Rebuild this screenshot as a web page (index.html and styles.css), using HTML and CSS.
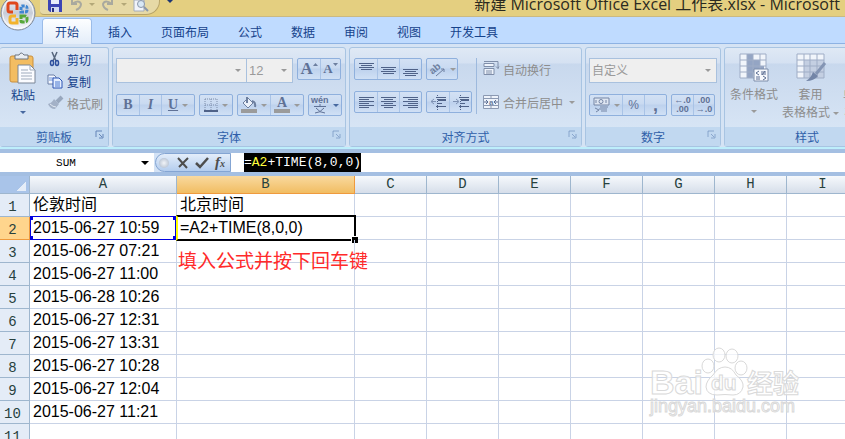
FILE: index.html
```html
<!DOCTYPE html>
<html lang="zh-CN">
<head>
  <meta charset="UTF-8">
  <meta name="viewport" content="width=device-width, initial-scale=1.0">
  <title>新建 Microsoft Office Excel 工作表.xlsx</title>
  <link rel="stylesheet" href="styles.css">
</head>
<body>
  <header class="titlebar">
    <button class="office" aria-label="Office">
      <svg width="36" height="36" viewBox="0 0 36 36">
        <defs>
          <linearGradient id="orb" x1="0" y1="0" x2="0" y2="1">
            <stop offset="0" stop-color="#f4f6fa"/>
            <stop offset=".5" stop-color="#c6ccd8"/>
            <stop offset="1" stop-color="#fbfcff"/>
          </linearGradient>
        </defs>
        <circle cx="18" cy="18" r="17" fill="url(#orb)" stroke="#7d8797"/>
        <circle cx="18" cy="18" r="15.500" fill="none" stroke="#fff" opacity=".8"/>
        <g fill="none" stroke-width="3">
          <path d="M13 17H10q-2 0-2-2V10q0-2 2-2h5q2 0 2 2v5" stroke="#e0471c"/>
          <path d="M21 17h4q2 0 2-2v-2q0-2-2-2h-3q-1 0-1 1z" stroke="#3f86d2" stroke-dasharray="3 1"/>
          <path d="M16 21h-4q-2 0-2 2v3q0 2 2 2h5v-5" stroke="#f3b32c"/>
          <path d="M21 21h4q2 0 2 2v2q0 2-2 2h-3q-1 0-1-1z" stroke="#57a83a" stroke-dasharray="5 1"/>
        </g>
      </svg>
    </button>
    <div class="quick">
      <svg width="16" height="14" viewBox="0 0 16 14"><path d="M1 0h14v12H3l-2-2z" fill="#3d45b5"/><path d="M4 0h8v4H4z" fill="#e9edfb"/><path d="M4 7h8v5H4z" fill="#d3daf2"/><path d="M5 8h2v4H5z" fill="#283080"/></svg>
      <svg width="14" height="12" viewBox="0 0 14 12"><path d="M3 0v4h5M3 4q7-5 9 0 0 4-5 6" fill="none" stroke="#a9a99e" stroke-width="2"/></svg>
      <i class="arrow light"></i>
      <svg width="14" height="12" viewBox="0 0 14 12"><path d="M11 0v4H6M11 4Q4-1 2 4q0 4 5 6" fill="none" stroke="#a9a99e" stroke-width="2"/></svg>
      <i class="arrow light"></i>
      <svg width="16" height="14" viewBox="0 0 16 14"><path d="M1 0h10v11H1z" fill="#f1f4fa" stroke="#a3acba"/><circle cx="8" cy="4" r="3.500" fill="#d8e8f6" stroke="#8a97aa"/><path d="M11 7l4 4" stroke="#8a97aa" stroke-width="2"/></svg>
    </div>
    <button class="customize" aria-label="自定义快速访问工具栏"><i class="arrow navy"></i></button>
    <div class="title">新建 Microsoft Office Excel 工作表.xlsx - Microsoft</div>
  </header>

  <nav class="tabs">
    <button class="tab active">开始</button>
    <button class="tab">插入</button>
    <button class="tab">页面布局</button>
    <button class="tab">公式</button>
    <button class="tab">数据</button>
    <button class="tab">审阅</button>
    <button class="tab">视图</button>
    <button class="tab">开发工具</button>
  </nav>

  <section class="ribbon">
    <div class="group">
      <div class="group-body clipboard">
        <button class="big paste">
          <svg width="28" height="32" viewBox="0 0 28 32"><rect x="1" y="4" width="23" height="26" rx="2" fill="#f3bd62" stroke="#c98f3c"/><path d="M6 3h4q2-4 5 0h4v4H6z" fill="#e9edf2" stroke="#6c7480"/><path d="M9 13h12l5 5v13H9z" fill="#fbfcff" stroke="#7b8697"/><path d="M21 13v5h5M12 18h7M12 21h11M12 24h11M12 27h11" fill="none" stroke="#9fabbc"/></svg>
          <span>粘贴</span>
          <i class="arrow blue"></i>
        </button>
        <div class="stack">
          <button class="small"><svg width="16" height="16" viewBox="0 0 16 16"><path d="M5 1l4 9M10 1L6 10" stroke="#56657c" stroke-width="1.500"/><ellipse cx="5" cy="12" rx="1.500" ry="2.500" fill="none" stroke="#2c4f9e" stroke-width="1.500"/><ellipse cx="10" cy="12" rx="1.500" ry="2.500" fill="none" stroke="#2c4f9e" stroke-width="1.500"/></svg>剪切</button>
          <button class="small"><svg width="16" height="16" viewBox="0 0 16 16"><path d="M1 2h6l2 2v7H1z" fill="#f4f8ff" stroke="#6a7fa6"/><path d="M2 5h5M2 7h5" stroke="#6f93d8"/><path d="M6 5h6l3 3v7H6z" fill="#e4eeff" stroke="#2c55b4"/><path d="M8 9h5M8 11h5M8 13h5" stroke="#4b78d0"/></svg>复制</button>
          <button class="small off"><svg width="16" height="16" viewBox="0 0 16 16"><path d="M15 2l-5 5" stroke="#98a7bd" stroke-width="4"/><path d="M7 4l5 5-4 5q-5 0-7-5 4-1 6-5z" fill="#a3b1c7"/><path d="M3 9q3 3 6 3" fill="none" stroke="#e2e9f3"/></svg>格式刷</button>
        </div>
      </div>
      <div class="group-label">剪贴板<svg class="launch" width="9" height="9" viewBox="0 0 9 9"><path d="M1 7V1h6M4 4l3 3M8 4v4H4" fill="none" stroke="#6485b8"/></svg></div>
    </div>

    <div class="group">
      <div class="group-body rows">
        <div class="row">
          <div class="fields">
            <label class="combo font-name"><select aria-label="字体"><option></option></select><i class="arrow"></i></label>
            <label class="combo font-size"><select aria-label="字号"><option>12</option></select><i class="arrow"></i></label>
          </div>
          <div class="btns">
            <button class="serif big-a" aria-label="增大字号">A<svg width="5" height="12" viewBox="0 0 5 12"><path d="M0 3l2.500-3L5 3z" fill="#6d7f9f"/></svg></button>
            <button class="serif small-a" aria-label="减小字号">A<svg width="5" height="12" viewBox="0 0 5 12"><path d="M0 0h5L2.500 3z" fill="#6d7f9f"/></svg></button>
          </div>
        </div>
        <div class="row">
          <div class="btns">
            <button class="serif">B</button>
            <button class="serif italic">I</button>
            <button class="serif wide"><u>U</u><i class="arrow"></i></button>
          </div>
          <div class="btns">
            <button class="pick" aria-label="边框"><svg width="14" height="14" viewBox="0 0 14 14"><path d="M1 1h12M1 7h12M1 1v11M7 1v11M13 1v11" stroke="#7d8daa" stroke-dasharray="1 1" fill="none"/><path d="M0 13h14" stroke="#4f6288" stroke-width="2"/></svg><i class="arrow"></i></button>
          </div>
          <div class="btns">
            <button class="pick" aria-label="填充颜色"><svg width="16" height="16" viewBox="0 0 16 16"><path d="M7 1l5 5-5 5-5-5z" fill="#eaf0f9" stroke="#6d7f9f"/><path d="M6 0v6M11 4q4 1 3 6" stroke="#6d7f9f" stroke-width="2" fill="none"/><path d="M0 12h16v4H0z" fill="#9b9b9b"/></svg><i class="arrow"></i></button>
            <button class="pick" aria-label="字体颜色"><span class="font-color">A</span><i class="arrow"></i></button>
          </div>
          <div class="btns">
            <button class="pick" aria-label="拼音"><svg width="18" height="18" viewBox="0 0 18 18"><text x="0" y="7" class="pinyin">wén</text><path d="M3 10.500h12M9 8v2M5 12q4 5 9 5M13 12q-4 5-9 5" fill="none" stroke="#5f7196"/></svg><i class="arrow blue"></i></button>
          </div>
        </div>
      </div>
      <div class="group-label">字体<svg class="launch dim" width="9" height="9" viewBox="0 0 9 9"><path d="M1 7V1h6M4 4l3 3M8 4v4H4" fill="none" stroke="#6485b8"/></svg></div>
    </div>

    <div class="group">
      <div class="group-body align">
        <div class="rows">
          <div class="row">
            <div class="btns lines">
              <button aria-label="顶端对齐"><svg width="15" height="15" viewBox="0 0 15 15"><path d="M0 1.500h15M2 3.500h11M0 5.500h15M2 7.500h11" stroke="#4f6288"/></svg></button>
              <button aria-label="垂直居中"><svg width="15" height="15" viewBox="0 0 15 15"><path d="M0 5.500h15M2 7.500h11M0 9.500h15M2 11.500h11" stroke="#4f6288"/></svg></button>
              <button aria-label="底端对齐"><svg width="15" height="15" viewBox="0 0 15 15"><path d="M0 7.500h15M2 9.500h11M0 11.500h15M2 13.500h11" stroke="#4f6288"/></svg></button>
            </div>
            <div class="btns">
              <button class="orient" aria-label="方向"><svg width="17" height="16" viewBox="0 0 17 16"><text x="1" y="11" transform="rotate(-40 6 9)" class="ab">ab</text><path d="M7 15l8-7M12 8h3v3" fill="none" stroke="#6d7f9f"/></svg><i class="arrow"></i></button>
            </div>
          </div>
          <div class="row">
            <div class="btns lines">
              <button aria-label="左对齐"><svg width="15" height="13" viewBox="0 0 15 13"><path d="M0 1.500h15M0 3.500h10M0 5.500h15M0 7.500h10M0 9.500h15M0 11.500h10" stroke="#4f6288"/></svg></button>
              <button aria-label="居中"><svg width="15" height="13" viewBox="0 0 15 13"><path d="M0 1.500h15M3 3.500h9M0 5.500h15M3 7.500h9M0 9.500h15M3 11.500h9" stroke="#4f6288"/></svg></button>
              <button aria-label="右对齐"><svg width="15" height="13" viewBox="0 0 15 13"><path d="M0 1.500h15M5 3.500h10M0 5.500h15M5 7.500h10M0 9.500h15M5 11.500h10" stroke="#4f6288"/></svg></button>
            </div>
            <div class="btns lines">
              <button aria-label="减少缩进"><svg width="16" height="15" viewBox="0 0 16 15"><path d="M6 2.500h10M8 4.500h8M8 5.500h8M8 8.500h4M6 11.500h10" stroke="#4f6288"/><path d="M7.500 0v15" stroke="#4f6288" stroke-dasharray="1 1"/><path d="M6 6.500H1M4 4L1 6.500 4 9" fill="none" stroke="#7f92b4"/></svg></button>
              <button aria-label="增加缩进"><svg width="16" height="15" viewBox="0 0 16 15"><path d="M6 2.500h10M8 4.500h8M8 5.500h8M8 8.500h4M6 11.500h10" stroke="#4f6288"/><path d="M7.500 0v15" stroke="#4f6288" stroke-dasharray="1 1"/><path d="M0 6.500h5M3 4l3 2.500L3 9" fill="none" stroke="#7f92b4"/></svg></button>
            </div>
          </div>
        </div>
        <div class="wrap">
          <button class="small off"><svg width="16" height="16" viewBox="0 0 16 16"><path d="M1 2.500h10v3H1zM1 7.500h10v6H1z" fill="#eef3fb" stroke="#7f8ea9"/><path d="M3 10h6M3 12h6M1 .500h14v7l-2-2M15 7.500l1-2" fill="none" stroke="#7f8ea9"/></svg>自动换行</button>
          <button class="small off"><svg width="16" height="16" viewBox="0 0 16 16"><path d="M.500 1.500h15v13H.500zM.500 4.500h15M.500 11.500h15M8 1.500v3M8 11.500v3" fill="#eef3fb" stroke="#8b99b2"/><path d="M1 8h4M11 8h4M3 6l2 2-2 2M13 6l-2 2 2 2" fill="none" stroke="#5a6d92"/><text x="6" y="11" class="merge-a">a</text></svg>合并后居中<i class="arrow"></i></button>
        </div>
      </div>
      <div class="group-label">对齐方式<svg class="launch dim" width="9" height="9" viewBox="0 0 9 9"><path d="M1 7V1h6M4 4l3 3M8 4v4H4" fill="none" stroke="#6485b8"/></svg></div>
    </div>

    <div class="group">
      <div class="group-body rows">
        <div class="row">
          <label class="combo number-format"><select aria-label="数字格式"><option>自定义</option></select><i class="arrow"></i></label>
        </div>
        <div class="row">
          <div class="btns">
            <button class="pick" aria-label="会计数字格式"><svg width="17" height="16" viewBox="0 0 17 16"><path d="M1 1h15v7H1z" fill="#dfe6f2" stroke="#7485a5"/><circle cx="8" cy="4.500" r="2" fill="none" stroke="#7485a5"/><path d="M3 3v3M13 3v3M7 10h8M6 12h8M8 14h6M2 11l4 2-3 2" fill="none" stroke="#7485a5"/></svg><i class="arrow"></i></button>
            <button>%</button>
            <button class="comma">,</button>
          </div>
          <div class="btns digits">
            <button aria-label="增加小数位数"><span>←.0</span><span>.00</span></button>
            <button aria-label="减少小数位数"><span>.00</span><span>→.0</span></button>
          </div>
        </div>
      </div>
      <div class="group-label">数字<svg class="launch dim" width="9" height="9" viewBox="0 0 9 9"><path d="M1 7V1h6M4 4l3 3M8 4v4H4" fill="none" stroke="#6485b8"/></svg></div>
    </div>

    <div class="group">
      <div class="group-body styles">
        <button class="big off">
          <svg width="30" height="30" viewBox="0 0 30 30"><path d="M1 2h26v24H1z" fill="#f1f5fb"/><path d="M8 2h6v24H8zM14 8h7v6h-7zM14 14h11v6H14z" fill="#94a5c4"/><path d="M1 2h26M1 8h26M1 14h26M1 20h26M1 26h26M1 2v24M8 2v24M14 2v24M21 2v24M27 2v24" stroke="#9fadc6" fill="none"/><path d="M15 17h14v12H15z" fill="#f7f9fd" stroke="#7d8daa"/><path d="M20 19l-3 2 3 2M22 20h5M22 22h5M26 19l-3 4M17 25h4M17 27h4M24 24l3 2-3 2" fill="none" stroke="#5a6d92"/></svg>
          <span>条件格式</span>
          <i class="arrow"></i>
        </button>
        <button class="big off">
          <svg width="30" height="30" viewBox="0 0 30 30"><path d="M1 2h27v24H1z" fill="#f1f5fb"/><path d="M8 8h20v18H8z" fill="#c4cfe2"/><path d="M1 2h27M1 8h27M1 14h27M1 20h27M1 26h27M1 2v24M8 2v24M14 2v24M21 2v24M28 2v24" stroke="#9fadc6" fill="none"/><path d="M29 11l-9 11" stroke="#8495b4" stroke-width="3"/><path d="M17 20l5 4q-4 5-12 5 5-3 7-9z" fill="#7385a7"/></svg>
          <span>套用</span>
          <span>表格格式<i class="arrow"></i></span>
        </button>
        <button class="big off">
          <svg width="30" height="30" viewBox="0 0 30 30"><path d="M1 2h26v24H1z" fill="#f1f5fb" stroke="#9fadc6"/></svg>
          <span>单元格</span>
          <span>样式<i class="arrow"></i></span>
        </button>
      </div>
      <div class="group-label">样式</div>
    </div>
  </section>

  <section class="formula-bar">
    <div class="name-box">
      <input type="text" value="SUM" aria-label="名称框">
      <button aria-label="名称列表"><i class="arrow black"></i></button>
    </div>
    <div class="fx">
      <i class="knob"></i>
      <button aria-label="取消"><svg width="12" height="12" viewBox="0 0 12 12"><path d="M1 1l9 10M11 1L2 10" stroke="#4d4d4d" stroke-width="2"/></svg></button>
      <button aria-label="输入"><svg width="14" height="12" viewBox="0 0 14 12"><path d="M1 6l4 4 8-9" fill="none" stroke="#4d4d4d" stroke-width="2.500"/></svg></button>
      <button class="fn" aria-label="插入函数">f<small>x</small></button>
    </div>
    <div class="formula" role="textbox" contenteditable="true" spellcheck="false" aria-label="编辑栏"><span class="picked">=<span class="ref">A2</span>+TIME(8,0,0)</span></div>
  </section>

  <main class="sheet">
    <table>
      <colgroup>
        <col class="c-num"><col class="c-a"><col class="c-b"><col span="7">
      </colgroup>
      <thead>
        <tr><th class="corner"></th><th>A</th><th class="current">B</th><th>C</th><th>D</th><th>E</th><th>F</th><th>G</th><th>H</th><th>I</th></tr>
      </thead>
      <tbody>
        <tr><th>1</th><td>伦敦时间</td><td>北京时间</td><td></td><td></td><td></td><td></td><td></td><td></td><td></td></tr>
        <tr><th class="current">2</th><td class="referenced">2015-06-27 10:59<i class="range"></i></td><td class="editing">=A2+TIME(8,0,0)<i class="cursor"></i></td><td></td><td></td><td></td><td></td><td></td><td></td><td></td></tr>
        <tr><th>3</th><td>2015-06-27 07:21</td><td class="noted"><span class="note">填入公式并按下回车键</span></td><td></td><td></td><td></td><td></td><td></td><td></td><td></td></tr>
        <tr><th>4</th><td>2015-06-27 11:00</td><td></td><td></td><td></td><td></td><td></td><td></td><td></td><td></td></tr>
        <tr><th>5</th><td>2015-06-28 10:26</td><td></td><td></td><td></td><td></td><td></td><td></td><td></td><td></td></tr>
        <tr><th>6</th><td>2015-06-27 12:31</td><td></td><td></td><td></td><td></td><td></td><td></td><td></td><td></td></tr>
        <tr><th>7</th><td>2015-06-27 13:31</td><td></td><td></td><td></td><td></td><td></td><td></td><td></td><td></td></tr>
        <tr><th>8</th><td>2015-06-27 10:28</td><td></td><td></td><td></td><td></td><td></td><td></td><td></td><td></td></tr>
        <tr><th>9</th><td>2015-06-27 12:04</td><td></td><td></td><td></td><td></td><td></td><td></td><td></td><td></td></tr>
        <tr><th>10</th><td>2015-06-27 11:21</td><td></td><td></td><td></td><td></td><td></td><td></td><td></td><td></td></tr>
        <tr><th>11</th><td></td><td></td><td></td><td></td><td></td><td></td><td></td><td></td><td></td></tr>
      </tbody>
    </table>
    <svg class="watermark" width="160" height="76" viewBox="0 0 160 76">
      <text x="3" y="47" class="wm-logo">Bai</text>
      <g class="wm-shape">
        <ellipse cx="61" cy="19" rx="6" ry="7"/>
        <ellipse cx="72" cy="8" rx="6" ry="7"/>
        <ellipse cx="85" cy="9" rx="6" ry="7"/>
        <ellipse cx="94" cy="21" rx="6" ry="7"/>
        <path d="M78 20q7 0 11 8 8 6 7 12-2 8-10 8-8-1-16 0-10 0-11-8 0-6 7-12 5-8 12-8z"/>
      </g>
      <text x="64" y="43" class="wm-du">du</text>
      <text x="100" y="46" class="wm-cn">经验</text>
      <text x="3" y="65" class="wm-url">jingyan.baidu.com</text>
    </svg>
  </main>
</body>
</html>
```
FILE: styles.css
```css
* { box-sizing: border-box; }

body, html { height: 100%; }

body {
  margin: 0;
  display: flex;
  flex-direction: column;
  overflow: hidden;
  background-color: #fff;
  font-family: "Liberation Sans", "Noto Sans CJK SC", sans-serif;
  font-size: 12px;
  color: #15428b;
}

button {
  margin: 0;
  padding: 0;
  border: 0;
  background: none;
  font: inherit;
  color: inherit;
}

svg { display: block; flex: none; overflow: visible; }

.arrow {
  flex: none;
  width: 0;
  height: 0;
  border: 3px solid transparent;
  border-top-color: #9a9a9a;
  border-bottom: 0;
}

.arrow.light { border-top-color: #b3a878; }
.arrow.blue { border-top-color: #47689f; }
.arrow.navy { border-top-color: #1d3573; }
.arrow.black { border-width: 4px 4px 0; border-top-color: #000; }

/* title bar */

.titlebar {
  position: relative;
  flex: none;
  display: flex;
  align-items: flex-start;
  height: 17px;
  padding-left: 40px;
  background-color: #e4cf80;
  border-bottom: 1px solid #cbb982;
}

.office {
  position: absolute;
  left: 0;
  top: -5px;
  z-index: 2;
}

.quick {
  display: flex;
  gap: 6px;
  width: 120px;
  height: 15px;
  padding-left: 7px;
  border: 1px solid #b7a469;
  border-top: 0;
  border-left: 0;
  border-radius: 0 0 14px 4px;
  background-color: #e6d9a6;
}

.quick .arrow { margin-top: 3px; }

.customize { padding: 3px 7px; }

.title {
  flex: 1;
  margin-top: -6px;
  padding-right: 5px;
  text-align: right;
  white-space: nowrap;
  font-family: "Open Sans", "Noto Sans CJK SC", sans-serif;
  font-size: 16px;
  line-height: 21px;
  color: #2b2a20;
}

/* tabs */

.tabs {
  flex: none;
  display: flex;
  gap: 5px;
  height: 27px;
  padding: 2px 0 0 43px;
  background-color: #bfdbff;
  border-bottom: 1px solid #8db2e3;
}

.tab {
  height: 25px;
  padding: 0 12px;
  border-radius: 3px 3px 0 0;
  white-space: nowrap;
}

.tab.active {
  background: linear-gradient(#fdfeff, #e3edf9);
  box-shadow: 0 0 0 1px #9bbce8;
  clip-path: inset(-1px -1px 0 -1px);
}

/* ribbon */

.ribbon {
  flex: none;
  display: flex;
  gap: 3px;
  overflow: hidden;
  padding-top: 3px;
  background-color: #d5e3f4;
  border-bottom: 2px solid #bdeefb;
}

.group {
  flex: none;
  display: flex;
  flex-direction: column;
  border: 1px solid #a8c4e2;
  border-radius: 3px;
  background: linear-gradient(#dfe9f5, #d5e1f2 15px, #c8d8ed 16px, #dbe8f7);
}

.group:first-child { border-left: 0; }

.group-body {
  height: 79px;
  padding: 0 3px;
}

.group-label {
  display: flex;
  align-items: center;
  justify-content: center;
  position: relative;
  height: 19px;
  background-color: #c1d8f0;
  color: #2f5fa9;
}

.launch {
  position: absolute;
  right: 4px;
  top: 3px;
}

.launch.dim { opacity: 0.6; }

.off { color: #8d8d8d; }

.small {
  display: flex;
  align-items: center;
  gap: 4px;
  height: 22px;
  white-space: nowrap;
}

.small .arrow { margin-left: 2px; }

.big {
  display: flex;
  flex-direction: column;
  align-items: center;
  padding-top: 4px;
  line-height: 18px;
  white-space: nowrap;
}

.big span { display: flex; align-items: center; gap: 3px; }
.big > .arrow { margin-top: 6px; }

.clipboard {
  display: flex;
  gap: 10px;
  padding: 0 5px 0 9px;
}

.paste svg { margin-bottom: 3px; }

.rows {
  display: flex;
  flex-direction: column;
  gap: 11px;
  padding-top: 10px;
}

.row {
  display: flex;
  align-items: flex-start;
  gap: 4px;
}

.fields { display: flex; }

.combo {
  display: flex;
  align-items: center;
  height: 25px;
  padding-right: 5px;
  border: 1px solid #a9c1de;
  background-color: #efefef;
}

.combo select {
  flex: 1;
  min-width: 0;
  height: 100%;
  padding: 0 2px;
  border: 0;
  background: none;
  appearance: none;
  font: inherit;
  color: #9a9a9a;
}

.font-name { width: 131px; }
.font-size { width: 46px; border-left: 0; font-size: 13px; }
.number-format { width: 128px; }

.btns {
  display: flex;
  border: 1px solid #8fb0dd;
  border-radius: 2px;
  background: linear-gradient(#d3e1f4, #c9daf1 9px, #bdd1ed 10px, #d0e0f5);
  color: #5f7196;
}

.btns button {
  display: flex;
  align-items: center;
  justify-content: center;
  gap: 4px;
  width: 22px;
  height: 20px;
}

.btns button + button {
  border-left: 1px solid #a9c3e6;
}

.btns .pick { width: 32px; }
.btns .pick + .pick { width: 33px; }
.btns .wide { width: 33px; }

.btns .serif {
  font-family: "Liberation Serif", serif;
  font-size: 14px;
  font-weight: bold;
}

.btns .italic { font-style: italic; }
.btns .big-a { gap: 0; font-size: 17px; }
.btns .small-a { gap: 0; width: 20px; font-size: 13px; }

.font-color {
  width: 16px;
  border-bottom: 4px solid #9b9b9b;
  font: bold 14px/12px "Liberation Serif", serif;
}

.pinyin { font: bold 9px "Liberation Sans", sans-serif; fill: #5f7196; }

.align {
  display: flex;
}

.align .rows { padding-left: 1px; }

.btns .orient { width: 30px; }
.ab, .merge-a { font: bold 10px "Liberation Sans", sans-serif; fill: #6d7f9f; }
.merge-a { font-size: 8px; }

.wrap {
  display: flex;
  flex-direction: column;
  gap: 11px;
  height: 56px;
  margin: 10px 3px 0 4px;
  padding-left: 6px;
  border-left: 1px solid #9db9dd;
}

.comma { font-size: 18px; font-weight: bold; }

.btns.digits button {
  flex-direction: column;
  gap: 0;
  width: 21px;
  font-size: 9px;
  font-weight: bold;
  line-height: 9px;
}

.styles {
  display: flex;
  gap: 4px;
  width: 164px;
  padding-left: 5px;
}

.styles svg { margin-bottom: 4px; }

/* formula bar */

.formula-bar {
  flex: none;
  display: flex;
  height: 27px;
  border-top: 4px solid #a4bfe2;
  border-bottom: 4px solid #a4bfe2;
  background-color: #d3e2f5;
}

.name-box {
  display: flex;
  width: 154px;
  background-color: #fff;
}

.name-box input {
  flex: 1;
  min-width: 0;
  padding: 0 4px 0 0;
  border: 0;
  outline: none;
  text-align: center;
  font-family: "Liberation Mono", monospace;
  font-size: 11px;
  color: #000;
}

.name-box button { width: 18px; display: flex; align-items: center; justify-content: center; }

.fx {
  display: flex;
  align-items: center;
  gap: 6px;
  width: 76px;
  margin-left: 1px;
  padding-left: 3px;
  border: 1px solid #84a5d3;
  border-radius: 10px 0 0 10px;
  background: linear-gradient(#e3edfa, #b4cdee);
}

.knob {
  flex: none;
  width: 10px;
  height: 10px;
  margin-right: 2px;
  border-radius: 50%;
  background: radial-gradient(#f2f4f8, #a8b6c9);
}

.fn {
  font-family: "Liberation Serif", serif;
  font-size: 15px;
  font-style: italic;
  font-weight: bold;
  line-height: 16px;
  color: #4d4d4d;
}

.fn small { font-size: 10px; }

.formula {
  flex: 1;
  padding-left: 13px;
  outline: none;
  background-color: #fff;
  font-family: "Liberation Mono", monospace;
  font-size: 13px;
  line-height: 19px;
  white-space: nowrap;
}

.picked {
  display: inline-block;
  background-color: #000;
  color: #fff;
}

.ref { color: #ffff3c; }

/* worksheet */

.sheet {
  position: relative;
  flex: 1;
  min-height: 0;
  overflow: hidden;
}

table {
  width: 859px;
  table-layout: fixed;
  border-collapse: separate;
  border-spacing: 0;
}

col { width: 72px; }
.c-num { width: 30px; }
.c-a { width: 147px; }
.c-b { width: 178px; }

th {
  height: 23px;
  padding: 0;
  border-right: 1px solid #9eb6ce;
  border-bottom: 1px solid #9eb6ce;
  background-color: #e4ecf7;
  vertical-align: bottom;
  font-family: "Liberation Mono", monospace;
  font-size: 14px;
  font-weight: normal;
  line-height: 17px;
  color: #27413e;
}

tbody th { padding-right: 4px; }

thead th {
  height: 18px;
  background: linear-gradient(#f6f9fc, #d6deea);
}

th.current { background-color: #ffd58d; border-color: #ef9a3d; }
thead th.current { background: linear-gradient(#f9d99f, #f1bd62); }

thead .corner {
  background: linear-gradient(135deg, transparent 50%, #e5edf8 50%) 16px 5px / 10px 10px no-repeat #a9c4e9;
}

td {
  height: 23px;
  padding: 0 3px;
  border-right: 1px solid #c9d3e6;
  border-bottom: 1px solid #c9d3e6;
  font-size: 16px;
  line-height: 22px;
  white-space: nowrap;
  color: #000;
}

.referenced, .editing, .noted { position: relative; }

.range {
  position: absolute;
  inset: -1px 0 -1px 0;
  border: 1px solid #0000e0;
  background:
    linear-gradient(#0000e0, #0000e0) 0 0 / 2px 3px,
    linear-gradient(#0000e0, #0000e0) 100% 0 / 2px 3px,
    linear-gradient(#0000e0, #0000e0) 0 100% / 2px 3px,
    linear-gradient(#0000e0, #0000e0) 100% 100% / 2px 3px;
  background-repeat: no-repeat;
}

.cursor {
  position: absolute;
  inset: -2px -2px -2px -1px;
  border: 2px solid #000;
  border-left-color: #ff0;
}

.cursor::after {
  content: "";
  position: absolute;
  right: -4px;
  bottom: -4px;
  width: 6px;
  height: 6px;
  border: 1px solid #fff;
  border-width: 1px 0 0 1px;
  background-color: #000;
}

.note {
  position: absolute;
  left: 1px;
  top: 11px;
  font-size: 19px;
  color: #ff2a2a;
}

.watermark {
  position: absolute;
  right: 38px;
  bottom: 16px;
}

.watermark text, .wm-shape {
  fill: #fff;
  fill-opacity: 0.7;
  stroke: #d9d9d9;
  stroke-width: 1px;
}

.wm-logo { font: bold 34px "Liberation Sans", sans-serif; }
.wm-du { font: bold 21px "Liberation Sans", sans-serif; }
.wm-cn { font: bold 26px "Noto Sans CJK SC", sans-serif; }
.wm-url { font: 18px "Liberation Sans", sans-serif; }
```
